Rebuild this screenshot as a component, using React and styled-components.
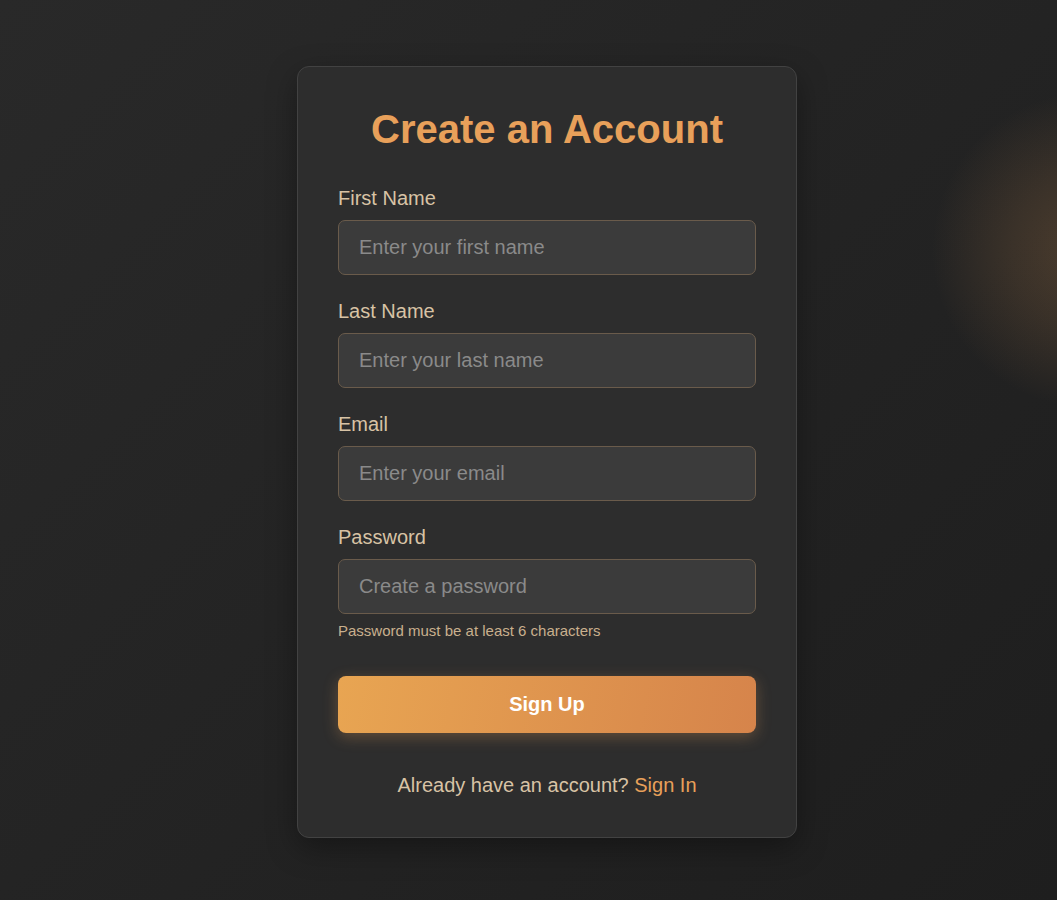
import React from "react";
import styled, { createGlobalStyle } from "styled-components";

const Global = createGlobalStyle`
  html, body { margin: 0; padding: 0; }
  body {
    font-family: "Liberation Sans", Arial, sans-serif;
    background: linear-gradient(135deg, #292929 0%, #1e1e1e 100%);
    min-height: 100vh;
    overflow: hidden;
  }
  * { box-sizing: border-box; }
`;

const Page = styled.div`
  position: relative;
  min-height: 100vh;
  display: flex;
  align-items: center;
  justify-content: center;
  padding: 3px 0 0 37px;
  overflow: hidden;
`;

const Glow = styled.div`
  position: absolute;
  left: 930px;
  top: 90px;
  width: 320px;
  height: 320px;
  border-radius: 50%;
  background: radial-gradient(circle, rgba(232, 160, 90, 0.22) 0%, rgba(232, 160, 90, 0.12) 35%, rgba(232, 160, 90, 0) 70%);
  pointer-events: none;
`;

const Card = styled.form`
  position: relative;
  width: 500px;
  background: #2d2d2d;
  border: 1px solid #424242;
  border-radius: 12px;
  padding: 40px;
  box-shadow: 0 10px 30px rgba(0, 0, 0, 0.35);
  display: flex;
  flex-direction: column;
`;

const Title = styled.h1`
  margin: 0 0 35px;
  text-align: center;
  font-size: 40px;
  line-height: 45px;
  font-weight: 700;
  color: #e8a05a;
`;

const Group = styled.div`
  display: flex;
  flex-direction: column;
  margin-bottom: ${(p) => (p.$last ? "36px" : "25px")};
`;

const Label = styled.label`
  font-size: 20px;
  line-height: 23px;
  color: #d8c3a5;
  margin-bottom: 10px;
`;

const Input = styled.input`
  height: 55px;
  width: 100%;
  background: #3b3b3b;
  border: 1px solid #6a5b4b;
  border-radius: 7px;
  padding: 0 20px;
  font-family: inherit;
  font-size: 20px;
  color: #e8e8e8;
  outline: none;
  &::placeholder { color: #8a8a8a; }
`;

const Hint = styled.div`
  margin-top: 8px;
  font-size: 15px;
  line-height: 18px;
  color: #c9b08e;
`;

const Button = styled.button`
  height: 57px;
  border: none;
  border-radius: 8px;
  background: linear-gradient(100deg, #e8a552 0%, #d6844b 100%);
  color: #ffffff;
  font-family: inherit;
  font-size: 20px;
  font-weight: 700;
  box-shadow: 0 4px 15px rgba(232, 160, 90, 0.3);
  cursor: pointer;
`;

const Footer = styled.p`
  margin: 40px 0 0;
  text-align: center;
  font-size: 20px;
  line-height: 24px;
  color: #d8c3a5;
`;

const Link = styled.a`
  color: #e8a05a;
  text-decoration: none;
`;

const fields = [
  { label: "First Name", type: "text", ph: "Enter your first name" },
  { label: "Last Name", type: "text", ph: "Enter your last name" },
  { label: "Email", type: "email", ph: "Enter your email" },
];

export default function App() {
  return (
    <>
      <Global />
      <Page>
        <Glow />
        <Card onSubmit={(e) => e.preventDefault()}>
          <Title>Create an Account</Title>
          {fields.map((f) => (
            <Group key={f.label}>
              <Label>{f.label}</Label>
              <Input type={f.type} placeholder={f.ph} />
            </Group>
          ))}
          <Group $last>
            <Label>Password</Label>
            <Input type="password" placeholder="Create a password" />
            <Hint>Password must be at least 6 characters</Hint>
          </Group>
          <Button type="submit">Sign Up</Button>
          <Footer>
            Already have an account? <Link href="#">Sign In</Link>
          </Footer>
        </Card>
      </Page>
    </>
  );
}
